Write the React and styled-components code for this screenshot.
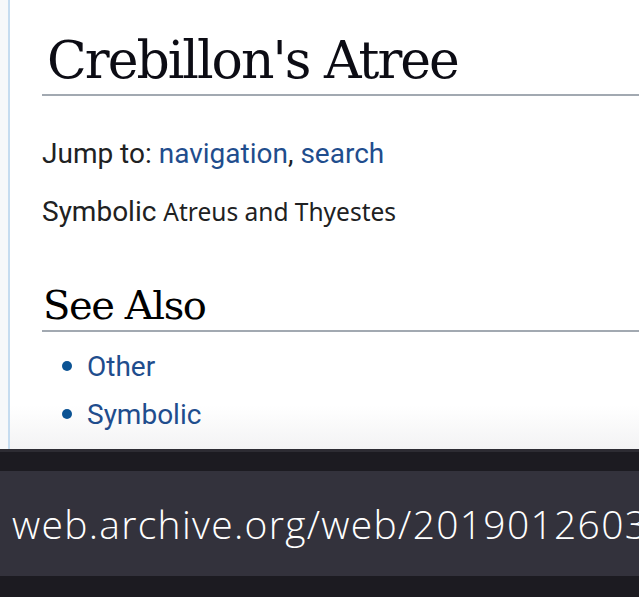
import React from "react";
import styled, { createGlobalStyle } from "styled-components";

const Global = createGlobalStyle`
  html, body { margin: 0; padding: 0; background: #1c1b21; }
  body { width: 639px; height: 597px; overflow: hidden; }
`;

const Screen = styled.div`
  width: 639px;
  height: 597px;
  display: flex;
  flex-direction: column;
  overflow: hidden;
`;

const Page = styled.div`
  height: 449px;
  display: flex;
  background: #f6f8fa;
  flex-shrink: 0;
`;

const Gutter = styled.div`
  width: 8px;
  flex-shrink: 0;
`;

const Content = styled.div`
  flex: 1;
  border-left: 2px solid #c5dcf0;
  background: linear-gradient(to bottom, #ffffff 0, #ffffff 405px, #f3f3f4 449px);
  padding-left: 32px;
  overflow: hidden;
`;

const Title = styled.h1`
  margin: 0;
  padding: 26px 0 0 5px;
  font-family: "DejaVu Serif", "Liberation Serif", serif;
  font-weight: 400;
  font-size: 52px;
  letter-spacing: -2px;
  line-height: 68px;
  color: #0c0c14;
  border-bottom: 2px solid #a2a9b1;
  white-space: nowrap;
`;

const Para = styled.p`
  margin: 0;
  padding-top: ${(p) => p.$top}px;
  font-family: Roboto, "Liberation Sans", sans-serif;
  font-size: 28px;
  line-height: 30px;
  color: #202122;
  white-space: nowrap;
`;

const Link = styled.a`
  color: #1f4d8d;
  text-decoration: none;
`;

const Alt = styled.span`
  font-family: "Noto Sans", "Open Sans", sans-serif;
  font-size: 24.5px;
`;

const Heading = styled.h2`
  margin: 0;
  padding: 53px 0 0 1px;
  font-family: "DejaVu Serif", "Liberation Serif", serif;
  font-weight: 400;
  font-size: 40px;
  letter-spacing: -1.4px;
  line-height: 50px;
  color: #000;
  border-bottom: 2px solid #a2a9b1;
`;

const List = styled.ul`
  margin: 0;
  padding: 20px 0 0 45px;
  list-style: none;
  display: flex;
  flex-direction: column;
  gap: 18px;
`;

const Item = styled.li`
  position: relative;
  font-family: Roboto, "Liberation Sans", sans-serif;
  font-size: 28px;
  line-height: 30px;
  &::before {
    content: "";
    position: absolute;
    left: -25px;
    top: 9px;
    width: 10px;
    height: 10px;
    border-radius: 50%;
    background: #0b5394;
  }
`;

const Bar = styled.div`
  flex: 1;
  background: #1c1b21;
  border-top: 3px solid #2d2c33;
  padding-top: 19px;
`;

const UrlPanel = styled.div`
  height: 105px;
  background: #33323c;
  display: flex;
  align-items: center;
  padding-left: 12px;
  overflow: hidden;
  white-space: nowrap;
`;

const Url = styled.span`
  font-family: "Open Sans", "Noto Sans", sans-serif;
  font-weight: 300;
  font-size: 39px;
  letter-spacing: 1.3px;
  color: #ffffff;
`;

export default function App() {
  return (
    <Screen>
      <Global />
      <Page>
        <Gutter />
        <Content>
          <Title>Crebillon's Atree</Title>
          <Para $top={43}>
            Jump to: <Link href="#">navigation</Link>, <Link href="#">search</Link>
          </Para>
          <Para $top={28}>
            Symbolic <Alt>Atreus and Thyestes</Alt>
          </Para>
          <Heading>See Also</Heading>
          <List>
            <Item><Link href="#">Other</Link></Item>
            <Item><Link href="#">Symbolic</Link></Item>
          </List>
        </Content>
      </Page>
      <Bar>
        <UrlPanel>
          <Url>web.archive.org/web/20190126033</Url>
        </UrlPanel>
      </Bar>
    </Screen>
  );
}
